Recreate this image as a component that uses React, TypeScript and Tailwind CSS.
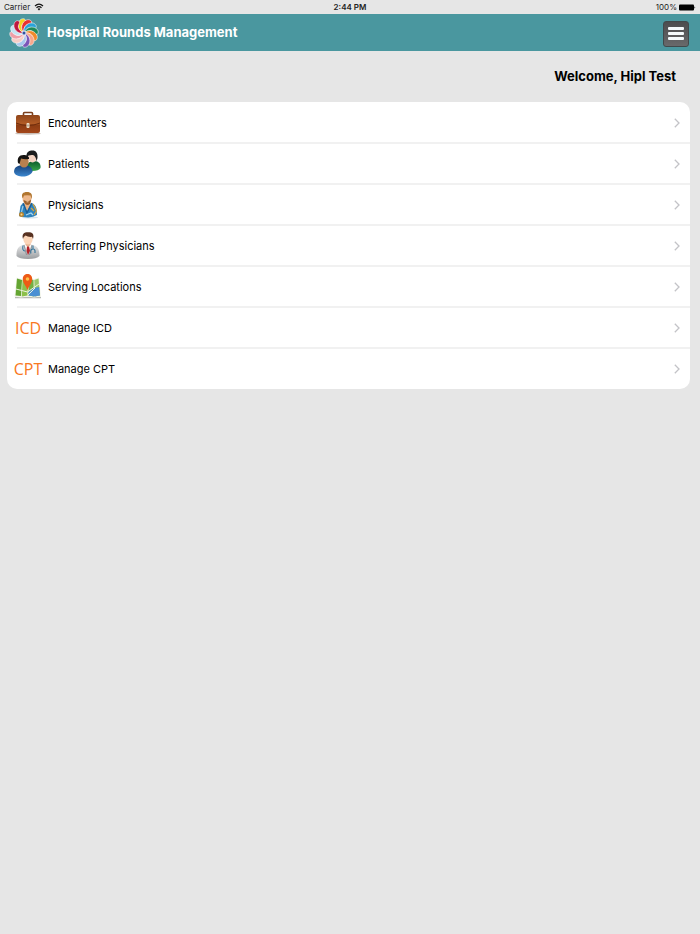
import type { ReactNode } from "react";

const petals = [
  "#f7d21e", "#e8322f", "#2ba3d8", "#1f8a5b", "#f08a2c", "#f7a78c",
  "#7b55b8", "#a9c8ee", "#f7cdc6", "#ee9fa8", "#c4e4f2", "#c01840",
];

function Logo() {
  return (
    <svg viewBox="0 0 32 32" className="size-8 shrink-0" aria-hidden="true">
      <circle cx="16" cy="16" r="12.500" fill="#f4f1f4" />
      {petals.map((color, i) => (
        <g key={color} transform={`rotate(${i * 30 - 16} 16 16)`}>
          <path d="M16 16C10.500 12.500 11.500 5.500 15 3C17 1.200 21 1.600 21 4.400C20.800 6.600 17.600 5.800 16.200 8C14.600 10.400 15 13 16 16Z" fill={color} stroke="#fff" strokeWidth=".5" />
        </g>
      ))}
      <circle cx="16" cy="16" r="2.400" fill="#d5def2" />
      <circle cx="16" cy="16" r="1.500" fill="#32519f" />
    </svg>
  );
}

function Briefcase() {
  return (
    <svg viewBox="0 0 28 28" className="size-7" aria-hidden="true">
      <defs>
        <linearGradient id="leather" x1="0" y1="0" x2="0" y2="1">
          <stop offset="0" stopColor="#8f451a" />
          <stop offset=".5" stopColor="#b35c26" />
          <stop offset=".55" stopColor="#8c3c12" />
          <stop offset="1" stopColor="#a3461a" />
        </linearGradient>
      </defs>
      <ellipse cx="14" cy="24.500" rx="13" ry="1.200" fill="#c9bdb5" />
      <path d="M9.500 7V4.500Q9.500 3.500 10.500 3.500H17.500Q18.500 3.500 18.500 4.500V7" fill="none" stroke="#7c3f1c" strokeWidth="1.600" />
      <path d="M4 6H24Q26 6 26 8V22Q26 24 24 24H4Q2 24 2 22V8Q2 6 4 6Z" fill="url(#leather)" />
      <path d="M2 14Q8 16.500 14 16.500T26 14" fill="none" stroke="#6f2c0c" />
      <rect x="12.500" y="14" width="3" height="5" rx="1" fill="#f1e4cf" />
      <path d="M13.500 15.500H14.500V17.500H13.500Z" fill="#8b7860" />
    </svg>
  );
}

function Patients() {
  return (
    <svg viewBox="0 0 28 28" className="size-7" aria-hidden="true">
      <defs>
        <linearGradient id="blueShirt" x1="0" y1="0" x2="0" y2="1">
          <stop offset="0" stopColor="#163f78" />
          <stop offset="1" stopColor="#3b87cf" />
        </linearGradient>
        <linearGradient id="greenShirt" x1="0" y1="0" x2="0" y2="1">
          <stop offset="0" stopColor="#0a5a2b" />
          <stop offset="1" stopColor="#35a348" />
        </linearGradient>
      </defs>
      <path d="M13 20C12 14 15 11 20 11C25 11 27 14 26.500 18Q25 21 18 21Z" fill="url(#greenShirt)" />
      <ellipse cx="18.500" cy="7.500" rx="4.500" ry="5" fill="#f3d3c2" />
      <path d="M12.500 7C12 2 15 .5 18.500 .5C22 .5 24 3 23.500 8L22.500 11.500Q22 6 19 5Q15 4.500 12.500 7Z" fill="#1c1e1f" />
      <path d="M0 22C0 17 4 15 9.500 15C15 15 18.500 17.500 18.500 21.500C17 25 13 26.500 9 26.500C5 26.500 1 25.500 0 22Z" fill="url(#blueShirt)" />
      <ellipse cx="10" cy="12" rx="4.700" ry="5.500" fill="#b9804f" />
      <path d="M4 13C3 8 5 5 9.500 5C13 5 15.500 6.500 15 9Q10 9.500 7 8.500L5.500 14Z" fill="#171513" />
    </svg>
  );
}

function Physician() {
  return (
    <svg viewBox="0 0 28 28" className="size-7" aria-hidden="true">
      <ellipse cx="16" cy="26.500" rx="8" ry="1" fill="#d4e3ec" />
      <path d="M5 25L6.500 15Q8 12 12 12H17Q21.500 13 22.500 18L23 24Q18 27.500 9 26Z" fill="#2d82bd" />
      <path d="M10 12L13 20L17 12Z" fill="#e8b184" />
      <path d="M9 12L13 22L18 12" fill="none" stroke="#1a5d96" strokeWidth="1.200" />
      <path d="M19 13L22.500 20L20 24M17 17L20 20" fill="none" stroke="#d7a33b" strokeWidth="1.200" />
      <ellipse cx="13" cy="7.500" rx="4.500" ry="5.500" fill="#eeb88c" />
      <path d="M8.500 7C7 3 9 1 13 1C17 1 19 3.500 17.500 8L16.500 4.500Q13 4 10 4.500L9 7Z" fill="#b17630" />
      <path d="M9.500 9L12 10H15L17 8.500Q17 14 13 14Q10 13 9.500 9Z" fill="#9c602c" />
      <path d="M12.500 10.800H14.500" stroke="#f2caa5" />
      <path d="M9 15L7.500 21" stroke="#9dcceb" strokeWidth="1.200" />
      <circle cx="7.500" cy="23.500" r="2.500" fill="#b68431" />
      <circle cx="7.500" cy="23.500" r="1" fill="#f6d78c" />
      <path d="M12 24L17 22L19 24" fill="none" stroke="#a9d7f1" strokeWidth="1.200" />
    </svg>
  );
}

function ReferringPhysician() {
  return (
    <svg viewBox="0 0 28 28" className="size-7" aria-hidden="true">
      <defs>
        <linearGradient id="coat" x1="0" y1="0" x2="0" y2="1">
          <stop offset="0" stopColor="#f3f3f3" />
          <stop offset="1" stopColor="#9b9da0" />
        </linearGradient>
      </defs>
      <path d="M2.500 24C2.500 17 4 14.500 9 13L14 11L19 13C24 14.500 25.500 18 25.500 24Q23 27 14 27Q5 27 2.500 24Z" fill="url(#coat)" />
      <path d="M10.500 12.500L14 22L17.500 12.500Z" fill="#fff" />
      <path d="M13 14H15L16 19L14 23L12.500 19Z" fill="#b52028" />
      <path d="M10 13L12.500 23M18 13L15.500 23" fill="none" stroke="#8a9298" />
      <path d="M9 13.500Q8 19 11 19M19 13.500V17M16.800 21.500V19Q17 17 19 17Q21 17 21 19V21" fill="none" stroke="#34749a" strokeWidth="1.100" />
      <path d="M11.500 10H16.500V13L14 15L11.500 13Z" fill="#e5b18f" />
      <ellipse cx="14" cy="7" rx="4.700" ry="5.500" fill="#fbd5b8" />
      <path d="M9 7C7.500 2 10 .2 14 .2C18.500 .2 20.500 2 19 7L18 4.800Q14 5.200 11.500 3.500L9.800 5Z" fill="#583222" />
    </svg>
  );
}

function MapPin() {
  return (
    <svg viewBox="0 0 28 28" className="size-7" aria-hidden="true">
      <path d="M1 24.500H27" stroke="#b7b9b4" strokeWidth="1.500" />
      <path d="M2.500 4.500L8 6L14 4.500L20 6L25 4.500L27 23.500L20 24.500L14 23.500L7 24.500L.5 23.500Z" fill="#f2f4e8" />
      <path d="M3 5.500L8 7L7 23L1.500 22.500Z" fill="#64a532" />
      <path d="M8.500 7L13.500 5.500V22.500L7.800 23.500Z" fill="#8cc04b" />
      <path d="M14.500 5.500L19.500 7L20 23.500L14.500 22.500Z" fill="#74af43" />
      <path d="M20.300 7L24.500 5.500L26 22.500L20.800 23.500Z" fill="#9bc76a" />
      <path d="M14.500 19L20 15L25.200 14L26 22.500L20.500 23.500L14.500 22.500Z" fill="#4a8fd3" />
      <path d="M2 16L13.500 19L25 11M14 22L21 15" fill="none" stroke="#eef3df" />
      <path d="M13.500 17.500C12.800 13.500 8.800 10.500 8.800 6C8.800 2.800 11 1 13.500 1C16 1 18.200 2.800 18.200 6C18.200 10.500 14.200 13.500 13.500 17.500Z" fill="#ed5b16" />
      <circle cx="13.500" cy="6" r="1.800" fill="#ffc04a" />
    </svg>
  );
}

function CodeMark({ children }: { children: string }) {
  return (
    <span aria-hidden="true" className="font-['Open_Sans',sans-serif] text-base leading-6 font-medium text-[#f97822]">
      {children}
    </span>
  );
}

const items: { label: string; icon: ReactNode }[] = [
  { label: "Encounters", icon: <Briefcase /> },
  { label: "Patients", icon: <Patients /> },
  { label: "Physicians", icon: <Physician /> },
  { label: "Referring Physicians", icon: <ReferringPhysician /> },
  { label: "Serving Locations", icon: <MapPin /> },
  { label: "Manage ICD", icon: <CodeMark>ICD</CodeMark> },
  { label: "Manage CPT", icon: <CodeMark>CPT</CodeMark> },
];

function StatusBar() {
  return (
    <div className="grid h-3.5 grid-cols-3 items-center pr-1 pl-1 text-[8px] leading-3 text-[#222]">
      <div className="flex items-center gap-1">
        <span>Carrier</span>
        <svg viewBox="0 0 10 8" className="h-2 w-2.5" fill="none" stroke="#111" strokeWidth="1.200" aria-hidden="true">
          <path d="M1 3Q5 -.6 9 3M2.500 4.800Q5 2.600 7.500 4.800" />
          <path d="M3.600 5.900Q5 4.800 6.400 5.900L5 7.400Z" fill="#111" stroke="none" />
        </svg>
      </div>
      <span className="text-center font-semibold">2:44 PM</span>
      <div className="flex items-center justify-end gap-0.5">
        <span>100%</span>
        <svg viewBox="0 0 17 7" className="h-[7px] w-[17px]" aria-hidden="true">
          <rect y=".5" width="15" height="6" rx="1" fill="#000" />
          <path d="M15.500 2.200Q17 3.500 15.500 4.800Z" fill="#000" />
        </svg>
      </div>
    </div>
  );
}

export default function App() {
  return (
    <div className="min-h-screen bg-[#e6e6e6] font-['Inter',sans-serif] text-black">
      <StatusBar />
      <header className="flex h-[37px] items-center bg-[#4a979f] pr-[11px] pl-2">
        <Logo />
        <h1 className="ml-[7px] flex-1 text-[13px] font-bold text-white">Hospital Rounds Management</h1>
        <button
          type="button"
          aria-label="Menu"
          className="mt-0.5 flex size-[26px] flex-col items-center justify-center gap-0.5 rounded-[3px] border border-[#41494b] bg-linear-to-b from-[#4c4c4e] to-[#69696b]"
        >
          <span className="h-[3px] w-4 rounded-[1px] bg-[#f5fafc]" />
          <span className="h-[3px] w-4 rounded-[1px] bg-[#f5fafc]" />
          <span className="h-[3px] w-4 rounded-[1px] bg-[#f5fafc]" />
        </button>
      </header>
      <main className="pr-2.5 pl-[7px]">
        <p className="py-4 pr-3.5 text-right text-[13px] leading-[19px] font-bold">Welcome, Hipl Test</p>
        <ul className="overflow-hidden rounded-[10px] bg-white">
          {items.map(({ label, icon }) => (
            <li key={label} className="group">
              <a href="#" className="flex h-[41px] flex-col pl-[7px]">
                <span className="flex flex-1 items-center pt-px pr-2.5">
                  <span className="flex w-7 shrink-0 justify-center">{icon}</span>
                  <span className="ml-1.5 flex-1 pt-px text-[11px]">{label}</span>
                  <svg viewBox="0 0 6 10" className="h-2.5 w-1.5" fill="none" stroke="#c3c3c7" strokeWidth="1.300" aria-hidden="true">
                    <path d="M.8 .8L5 5L.8 9.200" />
                  </svg>
                </span>
                <span className="-mb-px ml-[3px] h-0.5 bg-[#f1f1f1] group-last:bg-transparent" />
              </a>
            </li>
          ))}
        </ul>
      </main>
    </div>
  );
}
